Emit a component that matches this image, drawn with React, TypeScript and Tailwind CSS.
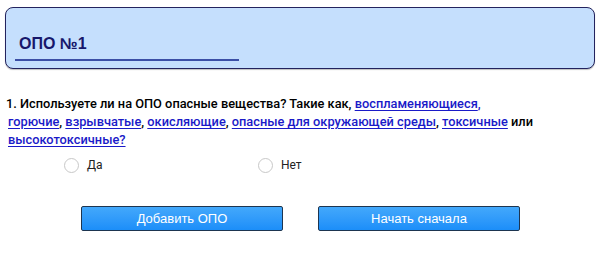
import React from "react";

const Link = ({ children }: { children: React.ReactNode }) => (
  <a href="#" className="text-[#1a1ac8] underline underline-offset-2">{children}</a>
);

const Radio = ({ label }: { label: string }) => (
  <label className="flex items-center gap-[8px]">
    <span className="w-[15px] h-[15px] rounded-full border border-[#c8c8c8] bg-white" />
    <span className="text-[12px] text-[#222]" style={{ fontFamily: "Roboto, sans-serif" }}>{label}</span>
  </label>
);

export default function App() {
  return (
    <div className="w-[600px] h-[254px] bg-white overflow-hidden" style={{ fontFamily: "Roboto, sans-serif" }}>
      <div className="pt-[7px] px-[5px]">
        <div className="h-[62px] rounded-[8px] border border-[#23235e] bg-[#c5dffd] pl-[9px] pt-[24px] shadow-[0_1px_1px_rgba(0,0,0,0.25)]">
          <div className="w-[224px] border-b-2 border-[#3b4fa6] pl-[4px] pb-[3px]">
            <span className="text-[16px] font-bold text-[#17176b] leading-[20px]" style={{ fontFamily: "'Liberation Sans', Arial, sans-serif" }}>ОПО №1</span>
          </div>
        </div>
      </div>
      <div className="pl-[6px] pt-[26px] text-[12.8px] leading-[18px] font-medium text-black whitespace-nowrap">
        1. Используете ли на ОПО опасные вещества? Такие как, <Link>воспламеняющиеся</Link><span className="text-[#1a1ac8]">,</span>
        <br />
        <span className="pl-[2px]"><Link>горючие</Link>, <Link>взрывчатые</Link>, <Link>окисляющие</Link>, <Link>опасные для окружающей среды</Link>, <Link>токсичные</Link> или</span>
        <br />
        <span className="pl-[2px]"><Link>высокотоксичные?</Link></span>
      </div>
      <div className="flex pt-[7px] pl-[64px]">
        <div className="w-[194px]"><Radio label="Да" /></div>
        <Radio label="Нет" />
      </div>
      <div className="flex pt-[32px] pl-[81px] gap-[35px]">
        <button className="w-[202px] h-[25px] rounded-[2px] border border-[#1d3550] bg-gradient-to-b from-[#43a8fb] to-[#1b8ef9] text-white text-[13px]" style={{ fontFamily: "'Liberation Sans', Arial, sans-serif" }}>Добавить ОПО</button>
        <button className="w-[202px] h-[25px] rounded-[2px] border border-[#1d3550] bg-gradient-to-b from-[#43a8fb] to-[#1b8ef9] text-white text-[13px]" style={{ fontFamily: "'Liberation Sans', Arial, sans-serif" }}>Начать сначала</button>
      </div>
    </div>
  );
}
